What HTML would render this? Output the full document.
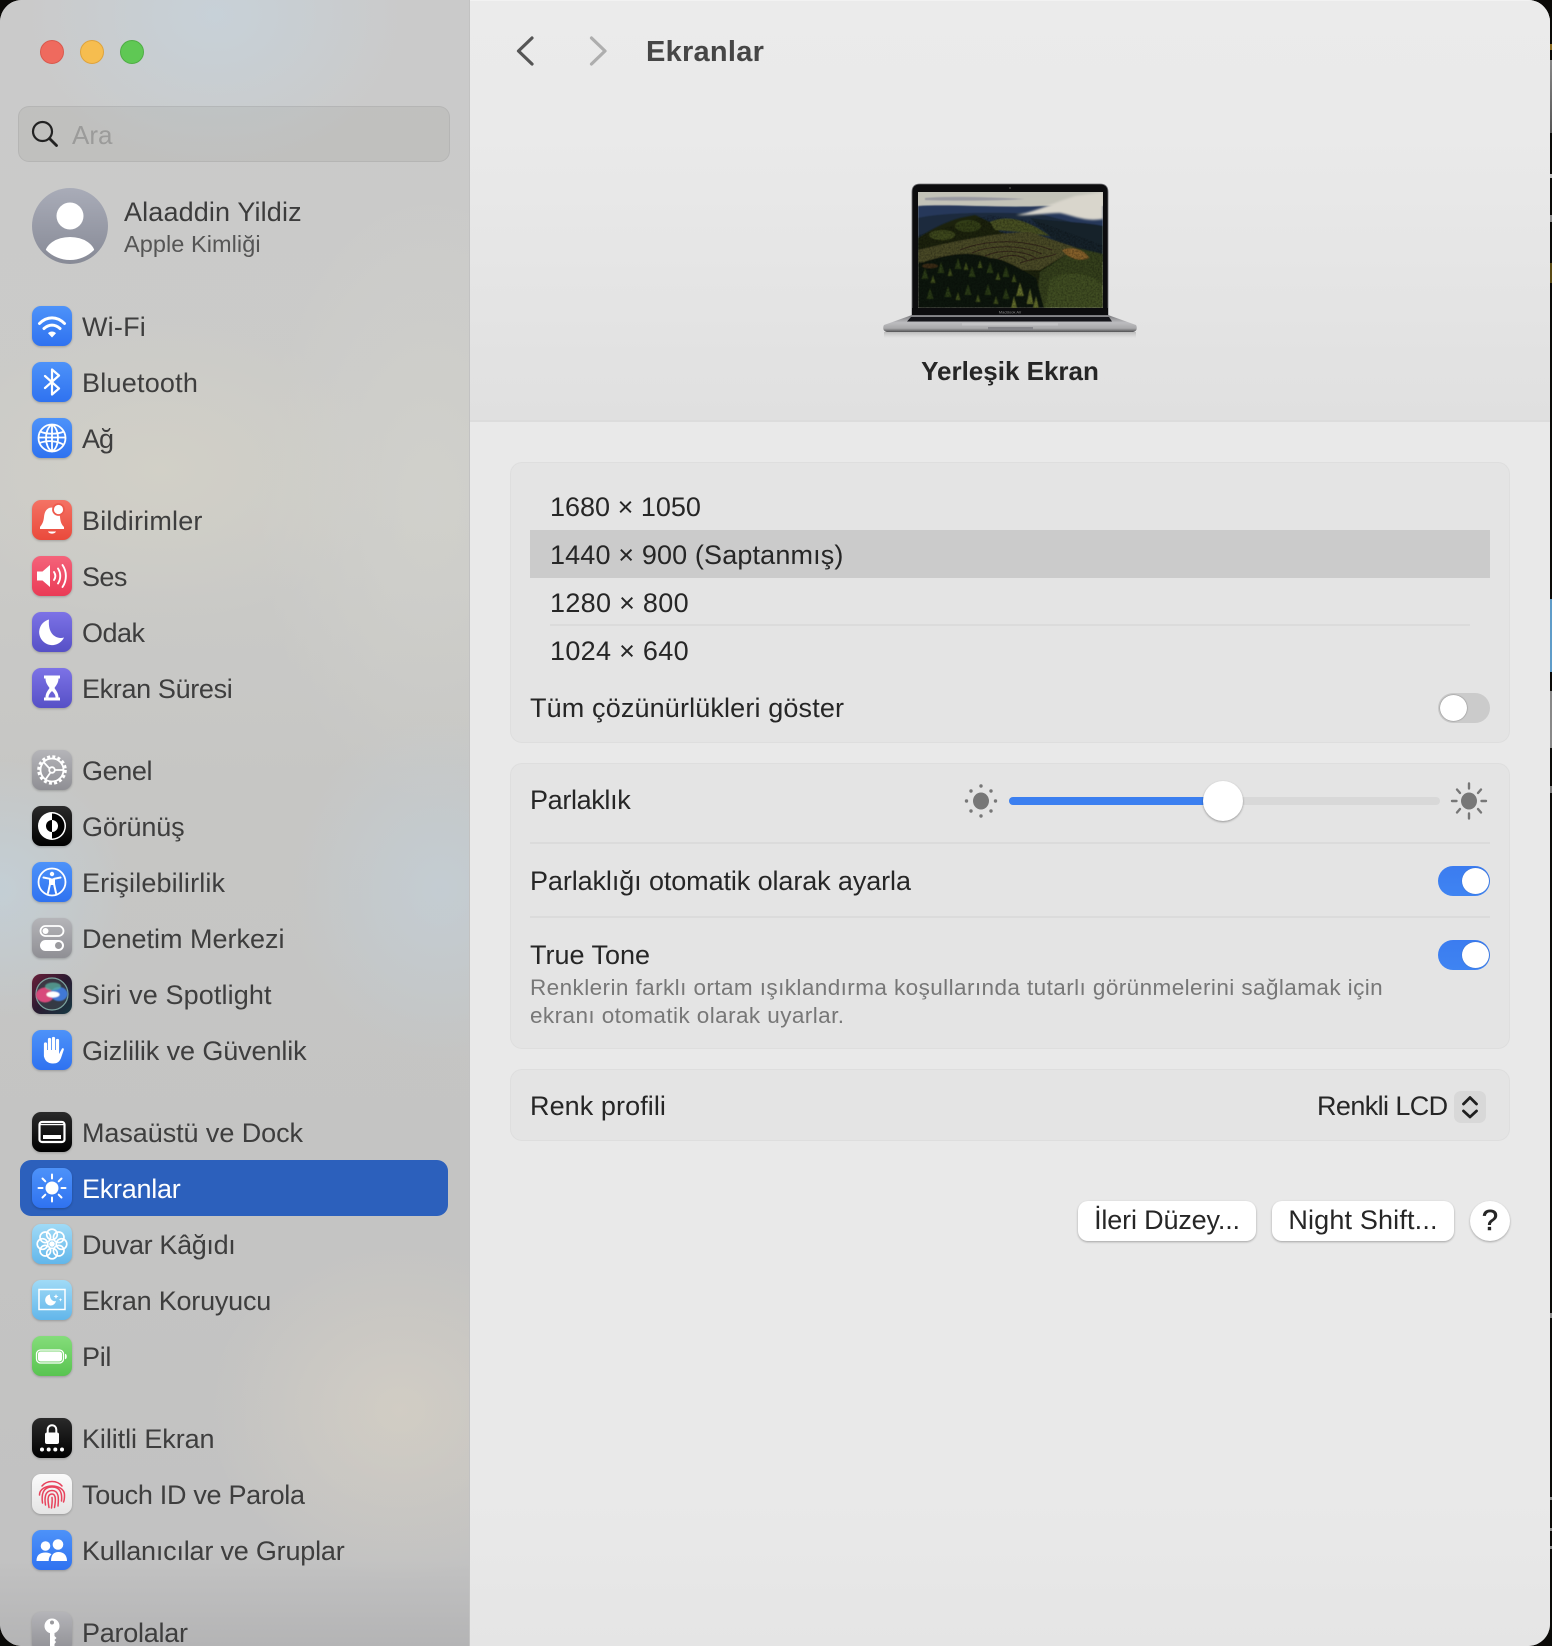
<!DOCTYPE html>
<html lang="tr">
<head>
<meta charset="utf-8">
<title>Ekranlar</title>
<style>
html,body{margin:0;padding:0;width:1552px;height:1646px;background:#0b0a08;overflow:hidden}
*{box-sizing:border-box}
body{font-family:"Liberation Sans","DejaVu Sans",sans-serif;position:relative}
.strip{position:absolute;left:1550px;width:2px}
#win{position:absolute;left:0;top:0;width:1550px;height:1646px;border-radius:22px;overflow:hidden;background:#e9e9e9}
#side{position:absolute;left:0;top:0;width:470px;height:1646px;overflow:hidden;
background:
 radial-gradient(ellipse 190px 150px at 215px 15px,rgba(198,212,222,.7),rgba(198,212,222,0)),
 radial-gradient(ellipse 230px 150px at 160px 470px,rgba(214,211,198,.6),rgba(214,211,198,0)),
 radial-gradient(ellipse 150px 170px at 440px 890px,rgba(194,208,218,.65),rgba(194,208,218,0)),
 radial-gradient(ellipse 130px 130px at 0px 890px,rgba(194,210,220,.7),rgba(194,210,220,0)),
 radial-gradient(ellipse 190px 170px at 400px 1410px,rgba(214,208,196,.75),rgba(214,208,196,0)),
 radial-gradient(ellipse 170px 300px at 430px 500px,rgba(212,212,206,.6),rgba(212,212,206,0)),
 linear-gradient(180deg,#cacaca 0,#cbcbc8 500px,#c6c6c4 800px,#c4c4c3 1200px,#c2c2c2 1560px,#b4b4b5 1646px);
border-right:1px solid #c2c2c2}
.light{position:absolute;width:24px;height:24px;border-radius:50%;top:40px}
#search{position:absolute;left:18px;top:106px;width:432px;height:56px;border-radius:11px;background:rgba(120,120,115,.12);border:1px solid rgba(110,110,110,.14)}
.t{position:absolute;white-space:nowrap;line-height:32px;height:32px}
.sec{position:absolute;left:0;width:470px}
.row{position:relative;height:56px;font-size:27px;color:#3e3e3e;line-height:58px;padding-left:82px;white-space:nowrap}
.row svg{position:absolute;left:32px;top:8px;width:40px;height:40px;filter:drop-shadow(0 1px 1px rgba(0,0,0,.22))}
.row.sel{color:#fff}
#selbg{position:absolute;left:20px;top:1160px;width:428px;height:56px;border-radius:11px;background:#2c60bc}
#main{position:absolute;left:470px;top:0;width:1080px;height:1646px;background:linear-gradient(180deg,#e9e9e9 1500px,#e5e5e5 1646px)}
#head{position:absolute;left:0;top:0;width:1080px;height:422px;background:linear-gradient(180deg,#ebebeb 0,#eaeaea 130px,#e0e0e0 421px);border-bottom:2px solid #dcdcdc;border-top:1px solid #f2f2f2}
.card{position:absolute;left:40px;width:1000px;background:#e4e4e4;border:1.5px solid #dedede;border-radius:12px}
.abs{position:absolute}
.tt{font-size:27px;color:#262626}
.sep{position:absolute;height:2px;background:#dbdbdb}
.tog{position:absolute;left:968px;width:52px;height:30px;border-radius:15px;background:linear-gradient(180deg,#3b7cf0,#3f84f2)}
.tog i{position:absolute;right:1.5px;top:2px;width:27px;height:26px;border-radius:50%;background:#fff;box-shadow:0 0 1px rgba(0,0,0,.3)}
.tog.off{background:#cbcbcb}
.tog.off i{right:auto;left:2px;box-shadow:0 0 1.5px rgba(0,0,0,.55)}
.btn{position:absolute;top:1201px;height:40px;background:#fff;border-radius:10px;box-shadow:0 1px 2px rgba(0,0,0,.3);font-size:27px;line-height:38px;color:#262626;text-align:center;white-space:nowrap}
</style>
</head>
<body>
<div class="strip" style="top:44px;height:6px;background:#8a6a20"></div>
<div class="strip" style="top:60px;height:73px;background:linear-gradient(#888,#555)"></div>
<div class="strip" style="top:174px;height:4px;background:#bbb"></div>
<div class="strip" style="top:215px;height:7px;background:#888"></div>
<div class="strip" style="top:263px;height:20px;background:#5a4a14"></div>
<div class="strip" style="top:599px;height:73px;background:#5f9cc8"></div>
<div class="strip" style="top:691px;height:57px;background:#888"></div>
<div class="strip" style="top:786px;height:7px;background:#777"></div>
<div class="strip" style="top:1313px;height:5px;background:#888"></div>
<div class="strip" style="top:1497px;height:3px;background:#888"></div>
<div class="strip" style="top:1528px;height:3px;background:#888"></div>
<div class="strip" style="top:1546px;height:3px;background:#888"></div>

<svg width="0" height="0" style="position:absolute">
<defs>
<linearGradient id="gb" x1="0" y1="0" x2="0" y2="1"><stop offset="0" stop-color="#4d92f9"/><stop offset="1" stop-color="#2f72f0"/></linearGradient>
<linearGradient id="gr" x1="0" y1="0" x2="0" y2="1"><stop offset="0" stop-color="#f47264"/><stop offset="1" stop-color="#ea4a3c"/></linearGradient>
<linearGradient id="gp" x1="0" y1="0" x2="0" y2="1"><stop offset="0" stop-color="#f4637a"/><stop offset="1" stop-color="#ea3a56"/></linearGradient>
<linearGradient id="gv" x1="0" y1="0" x2="0" y2="1"><stop offset="0" stop-color="#7c72e6"/><stop offset="1" stop-color="#5650c6"/></linearGradient>
<linearGradient id="gg" x1="0" y1="0" x2="0" y2="1"><stop offset="0" stop-color="#b4b4b8"/><stop offset="1" stop-color="#8f8f94"/></linearGradient>
<linearGradient id="gk" x1="0" y1="0" x2="0" y2="1"><stop offset="0" stop-color="#2a2a2a"/><stop offset="1" stop-color="#000"/></linearGradient>
<linearGradient id="gl" x1="0" y1="0" x2="0" y2="1"><stop offset="0" stop-color="#a0daf6"/><stop offset="1" stop-color="#62b6ea"/></linearGradient>
<linearGradient id="gn" x1="0" y1="0" x2="0" y2="1"><stop offset="0" stop-color="#84dc7a"/><stop offset="1" stop-color="#58c450"/></linearGradient>
<linearGradient id="gw" x1="0" y1="0" x2="0" y2="1"><stop offset="0" stop-color="#fafafa"/><stop offset="1" stop-color="#e4e4e4"/></linearGradient>
<linearGradient id="gs" x1="0" y1="0" x2="1" y2="1"><stop offset="0" stop-color="#6a1f3a"/><stop offset=".5" stop-color="#2a1a30"/><stop offset="1" stop-color="#163a44"/></linearGradient>
<linearGradient id="av" x1="0" y1="0" x2="0" y2="1"><stop offset="0" stop-color="#a9acb8"/><stop offset="1" stop-color="#878a96"/></linearGradient>
<linearGradient id="sky" x1="0" y1="0" x2="0" y2="1"><stop offset="0" stop-color="#c2c2b8"/><stop offset="1" stop-color="#cfcdbd"/></linearGradient>
<linearGradient id="base" x1="0" y1="0" x2="0" y2="1"><stop offset="0" stop-color="#77777b"/><stop offset=".45" stop-color="#bcbcbf"/><stop offset=".78" stop-color="#a8a8aa"/><stop offset="1" stop-color="#505052"/></linearGradient>
<linearGradient id="refl" x1="0" y1="0" x2="0" y2="1"><stop offset="0" stop-color="#8a8a8a" stop-opacity=".45"/><stop offset="1" stop-color="#aaa" stop-opacity="0"/></linearGradient>
<filter id="b1" x="-10%" y="-10%" width="120%" height="120%"><feGaussianBlur stdDeviation="1"/></filter>
<filter id="b05" x="-10%" y="-10%" width="120%" height="120%"><feGaussianBlur stdDeviation=".5"/></filter>
<filter id="noise" x="0" y="0" width="100%" height="100%"><feTurbulence type="fractalNoise" baseFrequency=".55" numOctaves="2" seed="4"/><feColorMatrix values="0 0 0 0 0  0 0 0 0 0  0 0 0 0 0  1.6 0 0 0 -.55"/></filter>
<clipPath id="scr"><rect x="918" y="192" width="185" height="116"/></clipPath>
<clipPath id="land"><path d="M918 235L990 215L1040 222L1103 245V308H918Z"/></clipPath>
</defs>
</svg>

<div id="win">
<div id="side">
  <div class="light" style="left:40px;background:#ef6a5e;border:1px solid #d9594d"></div>
  <div class="light" style="left:80px;background:#f6bd4f;border:1px solid #dea33c"></div>
  <div class="light" style="left:120px;background:#5fc854;border:1px solid #4fae45"></div>

  <div id="search"></div>
  <svg class="abs" style="left:30px;top:120px" width="30" height="30" viewBox="0 0 30 30"><circle cx="12.5" cy="11.5" r="9.5" fill="none" stroke="#222" stroke-width="2.2"/><path d="M19.5 18.5L26.5 25.5" stroke="#222" stroke-width="2.8" stroke-linecap="round"/></svg>
  <div class="t" style="left:72px;top:119px;font-size:26px;color:#9b9b9a">Ara</div>

  <svg class="abs" style="left:32px;top:188px" width="76" height="76" viewBox="0 0 76 76"><defs><clipPath id="avc"><circle cx="38" cy="38" r="34"/></clipPath></defs><circle cx="38" cy="38" r="38" fill="url(#av)"/><circle cx="38" cy="28" r="13.5" fill="#fff"/><ellipse cx="38" cy="66" rx="25" ry="17" fill="#fff" clip-path="url(#avc)"/></svg>
  <div class="t" style="left:124px;top:196px;font-size:27px;letter-spacing:.14px;color:#3c3c3c">Alaaddin Yildiz</div>
  <div class="t" style="left:124px;top:228px;font-size:23.5px;letter-spacing:.06px;color:#555">Apple Kimliği</div>

  <div id="selbg"></div>

  <div class="sec" style="top:298px">
    <div class="row" style="letter-spacing:.2px"><svg viewBox="0 0 40 40"><rect width="40" height="40" rx="9" fill="url(#gb)"/><g fill="none" stroke="#fff" stroke-linecap="round" stroke-width="3"><path d="M7.5 17.5C15 10 25 10 32.500 17.500"/><path d="M12 22.500C17 18 23 18 28 22.500"/></g><path d="M16 27.200C18.500 25 21.500 25 24 27.200L20 31.500Z" fill="#fff"/></svg>Wi-Fi</div>
    <div class="row" style="letter-spacing:.23px"><svg viewBox="0 0 40 40"><rect width="40" height="40" rx="9" fill="url(#gb)"/><path d="M13 14L27 26.500L20 32.500V7.500L27 13.500L13 26" fill="none" stroke="#fff" stroke-width="2.200" stroke-linejoin="round" stroke-linecap="round"/></svg>Bluetooth</div>
    <div class="row" style="letter-spacing:-1px"><svg viewBox="0 0 40 40"><rect width="40" height="40" rx="9" fill="url(#gb)"/><g fill="none" stroke="#fff" stroke-width="1.800"><circle cx="20" cy="20" r="13.500"/><path d="M20 6.500C12 11 12 29 20 33.500C28 29 28 11 20 6.500M20 6.500V33.500M8 13.500C15 16.500 25 16.500 32 13.500M7.500 25C15 22 25 22.500 32 27M6.500 19.500H33.500"/></g></svg>Ağ</div>
  </div>

  <div class="sec" style="top:492px">
    <div class="row" style="letter-spacing:.19px"><svg viewBox="0 0 40 40"><rect width="40" height="40" rx="9" fill="url(#gr)"/><path d="M20 7.500C14.500 7.500 12.500 12 12 17C11.500 22 10 24.500 8 27V29H32V27C29.500 24.500 28.500 22 28 17C27.500 12 25.500 7.500 20 7.500Z" fill="#fff"/><path d="M16 31.500C17 34.300 23 34.300 24 31.500Z" fill="#fff"/><circle cx="26.500" cy="9.500" r="5.500" fill="#fff" stroke="#ee5b4d" stroke-width="1.800"/></svg>Bildirimler</div>
    <div class="row" style="letter-spacing:-.6px"><svg viewBox="0 0 40 40"><rect width="40" height="40" rx="9" fill="url(#gp)"/><path d="M5 15.500H10.500L18 9V31L10.500 24.500H5Z" fill="#fff"/><g fill="none" stroke="#fff" stroke-width="1.900" stroke-linecap="round"><path d="M22 16C23.700 18.500 23.700 21.500 22 24"/><path d="M26 12.500C29 17 29 23 26 27.500"/><path d="M30.500 9C35 15.500 35 24.500 30.500 31"/></g></svg>Ses</div>
    <div class="row" style="letter-spacing:-.5px"><svg viewBox="0 0 40 40"><rect width="40" height="40" rx="9" fill="url(#gv)"/><path d="M17 7.500A13 13 0 1 0 32 25.500C25 27.500 15.500 23 17 7.500Z" fill="#fff"/></svg>Odak</div>
    <div class="row" style="letter-spacing:-.35px"><svg viewBox="0 0 40 40"><rect width="40" height="40" rx="9" fill="url(#gv)"/><path d="M12 7.500H28V10.500H26.500C26.500 15 24 17.500 22.500 20C24 22.500 26.500 25 26.500 29.500H28V32.500H12V29.500H13.500C13.500 25 16 22.500 17.500 20C16 17.500 13.500 15 13.500 10.500H12Z" fill="#fff"/><path d="M16.500 29.500C16.500 26.500 18.500 24.500 20 23C21.500 24.500 23.500 26.500 23.500 29.500Z" fill="#6a62d6"/></svg>Ekran Süresi</div>
  </div>

  <div class="sec" style="top:742px">
    <div class="row" style="letter-spacing:-.4px"><svg viewBox="0 0 40 40"><rect width="40" height="40" rx="9" fill="url(#gg)"/><circle cx="20" cy="20" r="13" fill="none" stroke="#fff" stroke-width="3.600" stroke-dasharray="2.900 2.200"/><circle cx="20" cy="20" r="11.500" fill="none" stroke="#fff" stroke-width="1.800"/><circle cx="20" cy="20" r="2.800" fill="none" stroke="#fff" stroke-width="1.800"/><path d="M17.500 18.500L11.500 12M22.800 20H31M18.500 22.500L13.500 29.500" stroke="#fff" stroke-width="1.800"/></svg>Genel</div>
    <div class="row" style="letter-spacing:-.15px"><svg viewBox="0 0 40 40"><rect width="40" height="40" rx="9" fill="url(#gk)"/><circle cx="20" cy="20" r="14" fill="#fff"/><path d="M20 7.500A12.500 12.500 0 0 1 20 32.500Z" fill="#000"/><path d="M20 14A6 6 0 0 0 20 26Z" fill="#000"/><path d="M20 14A6 6 0 0 1 20 26Z" fill="#fff"/></svg>Görünüş</div>
    <div class="row" style="letter-spacing:.14px"><svg viewBox="0 0 40 40"><rect width="40" height="40" rx="9" fill="url(#gb)"/><circle cx="20" cy="20" r="13.500" fill="none" stroke="#fff" stroke-width="1.800"/><circle cx="20" cy="12" r="2.200" fill="#fff"/><path d="M11.500 15.500L18 16.800V22L16 31M28.500 15.500L22 16.800V22L24 31M18 22H22" fill="none" stroke="#fff" stroke-width="2" stroke-linecap="round" stroke-linejoin="round"/><rect x="18" y="16.500" width="4" height="6" fill="#fff"/></svg>Erişilebilirlik</div>
    <div class="row"><svg viewBox="0 0 40 40"><rect width="40" height="40" rx="9" fill="url(#gg)"/><rect x="8.500" y="8" width="23" height="10" rx="5" fill="none" stroke="#fff" stroke-width="1.800"/><circle cx="13.500" cy="13" r="3" fill="#fff"/><rect x="8" y="22" width="24" height="11" rx="5.500" fill="#fff"/><circle cx="26.500" cy="27.500" r="3.500" fill="#9a9a9e"/></svg>Denetim Merkezi</div>
    <div class="row" style="letter-spacing:.12px"><svg viewBox="0 0 40 40"><rect width="40" height="40" rx="9" fill="url(#gs)"/><circle cx="20" cy="20" r="16" fill="#3a4048" opacity=".8"/><circle cx="20" cy="20" r="16" fill="none" stroke="#8ab8b0" stroke-width="1.200" opacity=".85"/><g filter="url(#b05)"><ellipse cx="13" cy="21" rx="9" ry="7.500" fill="#d84a7c"/><ellipse cx="27" cy="20" rx="8.500" ry="7" fill="#3f78d6"/><ellipse cx="21" cy="12.500" rx="8" ry="4" fill="#58b0a0" opacity=".75"/><ellipse cx="21" cy="20.500" rx="6.500" ry="3" fill="#fff"/></g></svg>Siri ve Spotlight</div>
    <div class="row" style="letter-spacing:-.1px"><svg viewBox="0 0 40 40"><rect width="40" height="40" rx="9" fill="url(#gb)"/><path d="M13.500 26V14M17.500 21V9.500M21.500 21V8.500M25.500 22V10.500" stroke="#fff" stroke-width="3.200" stroke-linecap="round" fill="none"/><path d="M12 20H27V24L30 18.500C31 17.500 32.200 18.500 31.800 19.800L29 28C27.500 32 25 33.500 21 33.500C16 33.500 12 30.500 12 25Z" fill="#fff"/></svg>Gizlilik ve Güvenlik</div>
  </div>

  <div class="sec" style="top:1104px">
    <div class="row" style="letter-spacing:-.07px"><svg viewBox="0 0 40 40"><rect width="40" height="40" rx="9" fill="url(#gk)"/><rect x="7.500" y="10" width="25" height="20" rx="2.500" fill="none" stroke="#fff" stroke-width="2.200"/><rect x="7.500" y="12" width="25" height="1.200" fill="#fff"/><rect x="11" y="23" width="18" height="4" fill="#fff"/></svg>Masaüstü ve Dock</div>
    <div class="row sel" style="letter-spacing:-.26px"><svg viewBox="0 0 40 40"><rect width="40" height="40" rx="9" fill="url(#gb)"/><circle cx="20" cy="20" r="6.500" fill="#fff"/><path d="M20 6.500V10.500M20 29.500V33.500M6.500 20H10.500M29.500 20H33.500M10.500 10.500L13.300 13.300M26.700 26.700L29.500 29.500M29.500 10.500L26.700 13.300M13.300 26.700L10.500 29.500" stroke="#fff" stroke-width="2" stroke-linecap="round"/></svg>Ekranlar</div>
    <div class="row" style="letter-spacing:-.35px"><svg viewBox="0 0 40 40"><rect width="40" height="40" rx="9" fill="url(#gl)"/><g fill="none" stroke="#fff" stroke-width="1.700"><circle cx="29.500" cy="20" r="5.300"/><circle cx="26.700" cy="26.700" r="5.300"/><circle cx="20" cy="29.500" r="5.300"/><circle cx="13.300" cy="26.700" r="5.300"/><circle cx="10.500" cy="20" r="5.300"/><circle cx="13.300" cy="13.300" r="5.300"/><circle cx="20" cy="10.500" r="5.300"/><circle cx="26.700" cy="13.300" r="5.300"/></g><circle cx="20" cy="20" r="2.800" fill="#fff"/></svg>Duvar Kâğıdı</div>
    <div class="row" style="letter-spacing:-.22px"><svg viewBox="0 0 40 40"><rect width="40" height="40" rx="9" fill="url(#gl)"/><rect x="7" y="9.500" width="26" height="20" fill="none" stroke="#fff" stroke-width="1.500"/><path d="M18 14.500A5.500 5.500 0 1 0 24 21C21 22 17.500 19 18 14.500Z" fill="#fff"/><path d="M24 14L24.700 15.800L26.500 16.500L24.700 17.200L24 19L23.300 17.200L21.500 16.500L23.300 15.800ZM28.500 18L29 19.300L30.300 19.800L29 20.300L28.500 21.600L28 20.300L26.700 19.800L28 19.300Z" fill="#fff"/></svg>Ekran Koruyucu</div>
    <div class="row" style="letter-spacing:-.3px"><svg viewBox="0 0 40 40"><rect width="40" height="40" rx="9" fill="url(#gn)"/><rect x="4.500" y="14" width="27" height="13" rx="4" fill="none" stroke="#fff" stroke-width="1.300"/><rect x="6" y="15.500" width="24" height="10" rx="2.500" fill="#fff"/><path d="M33.500 18.500C34.500 19 34.500 22 33.500 22.500Z" fill="#fff" stroke="#fff"/></svg>Pil</div>
  </div>

  <div class="sec" style="top:1410px">
    <div class="row" style="letter-spacing:-.08px"><svg viewBox="0 0 40 40"><rect width="40" height="40" rx="9" fill="url(#gk)"/><rect x="13" y="14.500" width="14" height="11.500" rx="2" fill="#fff"/><path d="M15.700 15V11.500A4.300 4.300 0 0 1 24.300 11.500V15" fill="none" stroke="#fff" stroke-width="2"/><circle cx="10" cy="31.500" r="2" fill="#fff"/><circle cx="16.700" cy="31.500" r="2" fill="#fff"/><circle cx="23.300" cy="31.500" r="2" fill="#fff"/><circle cx="30" cy="31.500" r="2" fill="#fff"/></svg>Kilitli Ekran</div>
    <div class="row" style="letter-spacing:-.3px"><svg viewBox="0 0 40 40"><rect width="40" height="40" rx="9" fill="url(#gw)"/><g fill="none" stroke="#e8435c" stroke-width="1.500" stroke-linecap="round"><path d="M10 12C15 6 25 6 30 12"/><path d="M7.500 21C7.500 9 32.500 9 32.500 21C32.500 24 32.500 26 31.500 28"/><path d="M10.500 29C9.500 22 10 13 20 13C30 13 30 22 29.500 27"/><path d="M13.500 31C12.500 25 12.500 16.500 20 16.500C27 16.500 26.800 24 26 32"/><path d="M17 33.500C16 28 14.500 20 20 20C24.500 20 23.500 28 22.500 33.500"/><path d="M20 23.500C20.500 27 20 30 19.500 34"/></g></svg>Touch ID ve Parola</div>
    <div class="row" style="letter-spacing:-.2px"><svg viewBox="0 0 40 40"><rect width="40" height="40" rx="9" fill="url(#gb)"/><circle cx="13.500" cy="16" r="4.800" fill="#fff"/><circle cx="26" cy="14.500" r="5.300" fill="#fff"/><path d="M4.500 31C4.500 25 8 22.500 13.500 22.500C16 22.500 18 23 19.500 24.500C17.500 26 16.700 28.500 16.700 31Z" fill="#fff"/><path d="M19 31C19 25 21.500 22 26.500 22C31.500 22 35 25 35 31Z" fill="#fff"/></svg>Kullanıcılar ve Gruplar</div>
  </div>

  <div class="sec" style="top:1604px">
    <div class="row" style="letter-spacing:-.25px"><svg viewBox="0 0 40 40"><rect width="40" height="40" rx="9" fill="url(#gg)"/><circle cx="20" cy="14" r="7.500" fill="#fff"/><circle cx="20" cy="10.500" r="2" fill="#9a9a9e"/><path d="M18 20H22.500V24L24.500 26L22.500 28L24 30L22.500 32V36L20 38L18 36Z" fill="#fff"/></svg>Parolalar</div>
  </div>
</div>

<div id="main">
  <div id="head"></div>
  <svg class="abs" style="left:0;top:0" width="200" height="100" viewBox="470 0 200 100"><path d="M532 38L518.500 51L532 64" fill="none" stroke="#555" stroke-width="3.200" stroke-linecap="round" stroke-linejoin="round"/><path d="M591.500 38L605 51L591.500 64" fill="none" stroke="#aeaeae" stroke-width="3.200" stroke-linecap="round" stroke-linejoin="round"/></svg>
  <div class="t" style="left:176px;top:36px;font-size:29px;font-weight:bold;letter-spacing:.26px;color:#464646">Ekranlar</div>

  <svg class="abs" style="left:410px;top:176px" width="260" height="166" viewBox="880 176 260 166">
    <rect x="884" y="332" width="252" height="6" fill="url(#refl)"/>
    <path d="M912 315V192Q912 184 920 184H1100Q1108 184 1108 192V315Z" fill="#0c0c0e" stroke="#707074" stroke-width=".8"/>
    <circle cx="1010" cy="188" r="1" fill="#444"/>
    <g clip-path="url(#scr)">
      <rect x="918" y="192" width="185" height="116" fill="url(#sky)"/>
      <g filter="url(#b05)">
        <path d="M925 198C950 196 985 197 1025 199C990 201 950 201 925 200Z" fill="#8f909c" opacity=".8"/>
        <path d="M918 206C950 204 1000 208 1045 206L1103 206V262H918Z" fill="#26375a"/>
        <path d="M918 218C945 212 1000 212 1040 214L1103 230V262H918Z" fill="#1a2a3c"/>
        <path d="M1030 218C1060 222 1085 222 1103 226V262L1060 245Z" fill="#14242a"/>
      </g>
      <path d="M1016 215C1035 212 1050 204 1075 196L1103 192V219C1085 222 1075 216 1060 213C1045 213 1030 216 1016 215Z" fill="#d9d6cc" filter="url(#b1)"/>
      <g filter="url(#b05)">
        <path d="M918 238C930 230 945 222 960 218L975 215L990 222L1000 232L1040 240L1103 260V308H918Z" fill="#1a2310"/>
        <ellipse cx="968" cy="226" rx="13" ry="6" fill="#333c16"/>
        <ellipse cx="942" cy="235" rx="13" ry="5" fill="#3c461a"/>
        <path d="M990 222C1005 215 1025 218 1050 236L1020 232L995 230Z" fill="#465024"/>
        <path d="M918 250C960 240 1000 232 1030 232L1077 248L1040 270L1000 270L950 264L918 262Z" fill="#4a4826"/>
        <path d="M1040 272L1077 248L1103 254V308H1035Z" fill="#34411b"/>
        <path d="M1062 250C1072 246 1085 250 1089 258C1079 262 1068 258 1062 250Z" fill="#85602c"/>
        <path d="M1050 280C1065 270 1090 272 1103 285V308H1045Z" fill="#404e20"/>
        <path d="M918 264C945 254 970 250 990 258C1005 258 1022 270 1036 278L1044 308H918Z" fill="#0e160a"/>
      </g>
      <g fill="none" stroke="#33261a" stroke-width="1.100" opacity=".9">
        <path d="M960 250C985 240 1020 238 1052 250"/>
        <path d="M972 253C990 245 1020 244 1042 254"/>
        <path d="M985 256C1000 249 1022 250 1036 258"/>
        <path d="M998 259C1008 254 1020 254 1028 261"/>
        <path d="M1020 263C1032 258 1046 258 1056 254"/>
      </g>
      <g filter="url(#b05)">
        <path d="M925 268l-3.500 11h7zM941 262l-3.500 11h7zM958 258l-3.500 11h7zM972 266l-3.500 11h7zM990 262l-3.500 11h7zM1006 266l-3.500 11h7zM930 288l-3.500 11h7zM948 286l-3.500 11h7zM968 284l-3.500 11h7zM988 284l-3.500 11h7zM1006 288l-3.500 11h7z" fill="#2c3a16"/>
        <path d="M933 275l-2.500 8h5zM950 268l-2.500 8h5zM966 262l-2.500 8h5zM980 260l-2.500 8h5zM998 272l-2.500 8h5zM1014 274l-2.500 8h5zM958 292l-2.500 8h5zM978 294l-2.500 8h5zM996 296l-2.500 8h5z" fill="#414f1c"/>
        <path d="M1020 282l-4 14h8zM1030 288l-3.500 16h7zM1036 296l-3 12h6zM1014 296l-3 12h6z" fill="#606a2c"/>
      </g>
      <ellipse cx="930" cy="266" rx="8" ry="2.500" fill="#5c3a1c" opacity=".6" filter="url(#b05)"/>
      <g clip-path="url(#land)"><rect x="918" y="192" width="185" height="116" filter="url(#noise)" opacity=".4"/></g>
    </g>
    <rect x="912" y="308" width="196" height="7" fill="#0c0c0e"/>
    <text x="1010" y="313.500" text-anchor="middle" font-size="4" fill="#8a8a8a" font-family="Liberation Sans, sans-serif">MacBook Air</text>
    <path d="M912 315H1108L1136 325C1138 329 1136 332 1132 332H888C884 332 882 329 884 325Z" fill="url(#base)"/>
    <path d="M911 317H1109L1112 321.500H907Z" fill="#15151a"/>
    <rect x="962" y="323" width="96" height="2.500" fill="#c4c4c6"/>
    <rect x="988" y="327" width="45" height="3" fill="#85858a"/>
  </svg>
  <div class="t" style="left:340px;top:355px;width:400px;text-align:center;font-size:26px;font-weight:bold;color:#262626">Yerleşik Ekran</div>

  <div class="card" style="top:462px;height:281px"></div>
  <div class="abs" style="left:60px;top:530px;width:960px;height:48px;background:#cbcbcb"></div>
  <div class="t tt" style="left:80px;top:491px">1680 × 1050</div>
  <div class="t tt" style="left:80px;top:539px;letter-spacing:.14px">1440 × 900 (Saptanmış)</div>
  <div class="t tt" style="left:80px;top:587px;letter-spacing:.3px">1280 × 800</div>
  <div class="sep" style="left:80px;top:624px;width:920px"></div>
  <div class="t tt" style="left:80px;top:635px;letter-spacing:.3px">1024 × 640</div>
  <div class="t tt" style="left:60px;top:692px;letter-spacing:.14px">Tüm çözünürlükleri göster</div>
  <div class="tog off" style="top:693px"><i></i></div>

  <div class="card" style="top:763px;height:286px"></div>
  <div class="t tt" style="left:60px;top:784px;letter-spacing:-.35px">Parlaklık</div>
  <svg class="abs" style="left:490px;top:770px" width="530" height="60" viewBox="960 770 530 60">
    <g fill="#777"><ellipse cx="981" cy="801" rx="8" ry="8.500"/><circle cx="981" cy="786" r="1.700"/><circle cx="981" cy="816" r="1.700"/><circle cx="966.500" cy="801" r="1.700"/><circle cx="995.500" cy="801" r="1.700"/><circle cx="971" cy="791" r="1.700"/><circle cx="991" cy="791" r="1.700"/><circle cx="971" cy="811" r="1.700"/><circle cx="991" cy="811" r="1.700"/></g>
    <rect x="1009" y="797" width="431" height="8" rx="4" fill="#d8d8d8"/>
    <path d="M1013 797H1223V805H1013A4 4 0 0 1 1013 797Z" fill="#3b7ff0"/>
    <g fill="#777"><ellipse cx="1469" cy="801" rx="8" ry="8.500"/></g>
    <g stroke="#777" stroke-width="2.400" stroke-linecap="round"><path d="M1469 783.500V788.500M1469 813.500V818.500M1452 801H1456.500M1481.500 801H1486M1457 789.500L1460 793M1478 809L1481 812.500M1481 789.500L1478 793M1460 809L1457 812.500"/></g>
  </svg>
  <div class="abs" style="left:733px;top:781px;width:40px;height:40px;border-radius:50%;background:#fff;box-shadow:0 1px 2px rgba(0,0,0,.35)"></div>
  <div class="sep" style="left:60px;top:842px;width:960px"></div>
  <div class="t tt" style="left:60px;top:865px;letter-spacing:-.1px">Parlaklığı otomatik olarak ayarla</div>
  <div class="tog" style="top:866px"><i></i></div>
  <div class="sep" style="left:60px;top:916px;width:960px"></div>
  <div class="t tt" style="left:60px;top:939px">True Tone</div>
  <div class="tog" style="top:940px"><i></i></div>
  <div class="t" style="left:60px;top:972px;font-size:22.500px;color:#777;letter-spacing:.42px">Renklerin farklı ortam ışıklandırma koşullarında tutarlı görünmelerini sağlamak için</div>
  <div class="t" style="left:60px;top:1000px;font-size:22.500px;color:#777;letter-spacing:.42px">ekranı otomatik olarak uyarlar.</div>

  <div class="card" style="top:1069px;height:72px"></div>
  <div class="t tt" style="left:60px;top:1090px;letter-spacing:.08px">Renk profili</div>
  <div class="t tt" style="left:847px;top:1090px;letter-spacing:-.6px">Renkli LCD</div>
  <div class="abs" style="left:984px;top:1091px;width:32px;height:32px;border-radius:7px;background:#d8d8d8"></div>
  <svg class="abs" style="left:984px;top:1091px" width="32" height="32" viewBox="0 0 32 32"><path d="M9.500 13L16 6.500L22.500 13M9.500 20L16 26L22.500 20" fill="none" stroke="#1f1f1f" stroke-width="2.800" stroke-linecap="round" stroke-linejoin="round"/></svg>

  <div class="btn" style="left:608px;width:178px;letter-spacing:-.16px">İleri Düzey...</div>
  <div class="btn" style="left:802px;width:182px;letter-spacing:.16px">Night Shift...</div>
  <div class="btn" style="left:1000px;width:40px;border-radius:50%;font-size:29px;line-height:40px;-webkit-text-stroke:.6px #262626">?</div>
</div>
</div>
</body>
</html>
